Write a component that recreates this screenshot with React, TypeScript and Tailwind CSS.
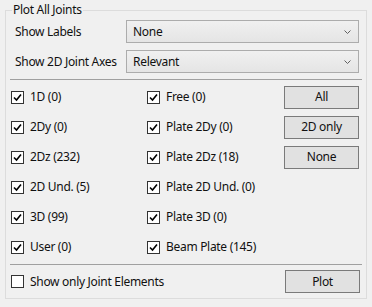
import React from 'react';

const font = { fontFamily: '"Segoe UI", "Noto Sans", sans-serif' };

function Check({ checked = true }: { checked?: boolean }) {
  return (
    <span className="w-[13px] h-[13px] border border-[#333333] bg-white flex items-center justify-center shrink-0">
      {checked && (
        <svg width="9" height="9" viewBox="0 0 9 9">
          <path d="M1 4.5 L3.5 7 L8 1.5" fill="none" stroke="#000" strokeWidth="1.6" />
        </svg>
      )}
    </span>
  );
}

function CheckItem({ label, checked = true }: { label: string; checked?: boolean }) {
  return (
    <div className="flex items-center gap-[6px]">
      <Check checked={checked} />
      <span>{label}</span>
    </div>
  );
}

function Combo({ value }: { value: string }) {
  return (
    <div className="w-[233px] h-[23px] border border-[#acacac] bg-gradient-to-b from-[#f0f0f0] to-[#e5e5e5] flex items-center justify-between pl-[6px] pr-[7px]">
      <span>{value}</span>
      <svg width="7" height="4" viewBox="0 0 7 4">
        <path d="M0.5 0.5 L3.5 3.5 L6.5 0.5" fill="none" stroke="#606060" strokeWidth="1" />
      </svg>
    </div>
  );
}

function Btn({ label }: { label: string }) {
  return (
    <div className="w-[75px] h-[23px] border border-[#7a7a7a] bg-[#e1e1e1] flex items-center justify-center">
      {label}
    </div>
  );
}

export default function App() {
  const rows = [
    ['1D (0)', 'Free (0)', 'All'],
    ['2Dy (0)', 'Plate 2Dy (0)', '2D only'],
    ['2Dz (232)', 'Plate 2Dz (18)', 'None'],
    ['2D Und. (5)', 'Plate 2D Und. (0)', ''],
    ['3D (99)', 'Plate 3D (0)', ''],
    ['User (0)', 'Beam Plate (145)', ''],
  ];

  return (
    <div className="w-[372px] h-[307px] bg-[#f0f0f0] text-[12px] leading-[16px] tracking-[-0.3px] text-[#111] pt-[2px] pl-[5px]" style={font}>
      <fieldset className="w-[362px] h-[297px] border border-[#dcdcdc]">
        <legend className="ml-[6px] px-[1px]">Plot All Joints</legend>

        <div className="flex items-center mt-[2px]">
          <span className="w-[120px] pl-[9px]">Show Labels</span>
          <Combo value="None" />
        </div>
        <div className="flex items-center mt-[7px]">
          <span className="w-[120px] pl-[9px]">Show 2D Joint Axes</span>
          <Combo value="Relevant" />
        </div>

        <div className="ml-[4px] mt-[6px] w-[352px] h-px bg-[#a0a0a0]" />

        <div className="mt-[2px]">
          {rows.map(([a, b, c]) => (
            <div key={a} className="h-[30px] grid grid-cols-[136px_137px_75px] items-center pl-[5px]">
              <CheckItem label={a} />
              <CheckItem label={b} />
              {c ? <Btn label={c} /> : <span />}
            </div>
          ))}
        </div>

        <div className="ml-[4px] mt-[2px] w-[352px] h-px bg-[#a0a0a0]" />

        <div className="flex items-center justify-between mt-[5px] pl-[5px] pr-[6px]">
          <CheckItem label="Show only Joint Elements" checked={false} />
          <Btn label="Plot" />
        </div>
      </fieldset>
    </div>
  );
}
